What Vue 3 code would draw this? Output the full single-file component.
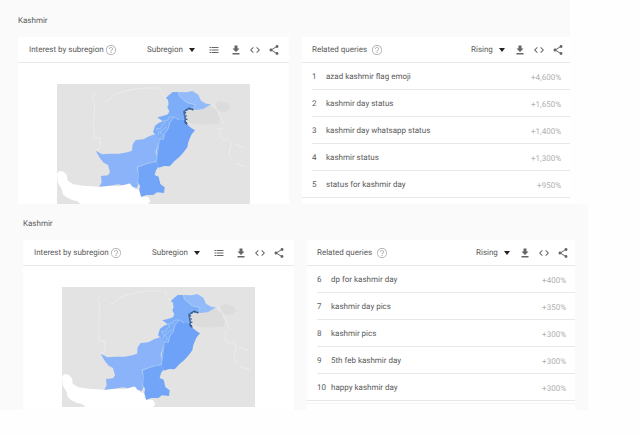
<script setup>
const sections = [
  {
    id: 'top',
    rows: [
      [1, 'azad kashmir flag emoji', '+4,600%'],
      [2, 'kashmir day status', '+1,650%'],
      [3, 'kashmir day whatsapp status', '+1,400%'],
      [4, 'kashmir status', '+1,300%'],
      [5, 'status for kashmir day', '+950%'],
    ],
  },
  {
    id: 'more',
    rows: [
      [6, 'dp for kashmir day', '+400%'],
      [7, 'kashmir day pics', '+350%'],
      [8, 'kashmir pics', '+300%'],
      [9, '5th feb kashmir day', '+300%'],
      [10, 'happy kashmir day', '+300%'],
    ],
  },
]

const actions = [
  { name: 'Download', d: 'M19 9h-4V3H9v6H5l7 7 7-7zM5 18v3h14v-3H5z' },
  { name: 'Embed', d: 'M9.4 16.6L4.8 12l4.6-4.6L8 6l-6 6 6 6 1.4-1.4zm5.2 0l4.6-4.6-4.6-4.6L16 6l6 6-6 6-1.4-1.4z' },
  { name: 'Share', d: 'M18 16.1c-.8 0-1.4.3-2 .8l-7.100-4.200c.1-.2.1-.4.1-.7s0-.5-.1-.7L16 7.200c.5.5 1.200.8 2 .8 1.700 0 3-1.300 3-3s-1.300-3-3-3-3 1.300-3 3c0 .2 0 .5.1.7L8 9.800C7.500 9.300 6.800 9 6 9c-1.700 0-3 1.300-3 3s1.300 3 3 3c.8 0 1.500-.3 2-.8l7.100 4.200c-.1.2-.1.4-.1.6 0 1.600 1.300 2.900 3 2.900s2.900-1.300 2.900-2.900-1.300-2.900-2.900-2.900z' },
]
</script>

<template>
  <main>
    <section v-for="s in sections" :key="s.id" class="section" :class="s.id">
      <h2>Kashmir</h2>
      <div class="cards">
        <article class="card region">
          <header>
            <h3>Interest by subregion</h3>
            <button class="help" aria-label="Help">
              <svg viewBox="0 0 24 24"><path d="M11 18h2v-2h-2v2zm1-16C6.500 2 2 6.500 2 12s4.500 10 10 10 10-4.500 10-10S17.500 2 12 2zm0 18.700c-4.800 0-8.700-3.900-8.700-8.700S7.200 3.300 12 3.300s8.700 3.900 8.700 8.700-3.900 8.700-8.700 8.700zM12 6c-2.200 0-4 1.800-4 4h1.500c0-1.400 1.100-2.500 2.500-2.500s2.500 1.100 2.500 2.500c0 2-3.200 2-3.200 5h1.500c0-2.200 3.200-2.500 3.200-5 0-2.200-1.800-4-4-4z" /></svg>
            </button>
            <span class="pick">
              <select aria-label="Resolution"><option>Subregion</option></select>
              <svg viewBox="0 0 6 4"><path d="M0 0h6L3 4z" /></svg>
            </span>
            <button class="icon list" aria-label="List view">
              <svg viewBox="0 0 24 24"><path d="M3 6h3v2H3zM3 11h3v2H3zM3 16h3v2H3zM7 6h14v2H7zM7 11h14v2H7zM7 16h14v2H7z" /></svg>
            </button>
            <button v-for="a in actions" :key="a.name" class="icon" :aria-label="a.name">
              <svg viewBox="0 0 24 24"><path :d="a.d" /></svg>
            </button>
          </header>
          <div class="map">
            <svg viewBox="21 18 579 360" role="img" aria-label="Interest in Pakistan by subregion">
              <path fill="#e3e3e3" d="M21 18H600V378H21z" />
              <path fill="#fff" d="M21 286L29 279 41 281 51 292 53 308 70 319 100 323 149 326 180 324 207 325 226 320 244 317 252 324 256 334 268 336 270 354 294 357 301 370 294 378H91L82 370 67 366 48 357 38 347 35 333 23 313z" />
              <path fill="#dcdcdc" d="M497 75L512 69 535 76 543 89 532 99 515 103 498 96zM439 94L480 82 498 96 510 118 508 136 470 140 432 137 411 133 404 107 420 96z" />
              <g fill="none" stroke="#f0f0f0" stroke-width="2">
                <path d="M137 218L150 210 151 181 132 178 131 130 134 79 128 55 139 45 M164 69L180 65 188 53 211 43 244 35 281 30 320 30M347 62L336 45 327 27 M487 77L504 98 515 127 525 143 M502 151L515 153 508 172 521 187 533 182 544 196 540 213 537 236 547 244 M551 197L580 209 M556 257L586 265" />
              </g>
              <path fill="#7dadf9" d="M357 51L368 42 385 42 389 54 410 74 436 80 433 91 413 91 402 102 405 125 387 126 373 119 360 133 354 153 344 166 340 184 328 188 322 176 309 162 315 143 327 134 338 130 322 118 338 114 354 109 358 100 352 88 356 78 353 64 347 61z" />
              <path fill="#93bbfa" d="M385 42L410 43 427 39 445 50 453 68 468 77 483 79 460 93 438 96 427 93 436 80 410 74 389 54z" />
              <path fill="#8ab3f9" d="M137 218L157 229 181 227 208 227 232 223 246 218 248 199 257 186 280 184 297 175 314 169 325 176 328 188 323 202 317 222 321 251 300 253 282 260 262 266 264 287 266 317 260 330 248 327 239 316 217 322 205 319 178 323 148 326 155 313 153 294 174 292 180 283 174 261 161 254 149 239z" />
              <path fill="#6ea2f8" d="M373 117L387 126 405 125 413 141 425 151 435 157 424 170 415 192 412 208 399 225 387 238 373 250 359 265 343 264 326 269 319 250 320 222 324 202 328 184 340 184 344 165 354 153 360 133z" />
              <path fill="#72a5f7" d="M264 267L282 260 303 252 321 253 325 266 318 277 314 291 326 296 331 318 344 328 342 345 321 343 310 351 289 351 274 357 268 337 270 323 262 308z" />
              <g fill="none" stroke="#a9d0f6" stroke-width="2">
                <path d="M385 42L388 55 411 74 436 80 428 94 M262 318L265 290 262 267 285 259 319 250 324 217 328 184 340 184 344 166 354 153 359 133 373 117 387 126M325 172L327 161 319 151 331 152 337 141 345 136 339 129 352 127 358 117 373 117M328 183L338 173 330 162 339 154 350 146" />
              </g>
              <path fill="none" stroke="#3f6ea8" stroke-width="5" d="M430 95L416 91 402 101 404 113 406 124 405 133 412 139" />
              <path fill="none" stroke="#2f5078" stroke-width="4" stroke-dasharray="4 6" d="M430 95L416 91 406 101 408 113 410 124 408 133 412 139" />
            </svg>
          </div>
        </article>
        <article class="card queries">
          <header>
            <h3>Related queries</h3>
            <button class="help" aria-label="Help">
              <svg viewBox="0 0 24 24"><path d="M11 18h2v-2h-2v2zm1-16C6.500 2 2 6.500 2 12s4.500 10 10 10 10-4.500 10-10S17.500 2 12 2zm0 18.700c-4.800 0-8.700-3.900-8.700-8.700S7.200 3.300 12 3.300s8.700 3.900 8.700 8.700-3.900 8.700-8.700 8.700zM12 6c-2.200 0-4 1.800-4 4h1.500c0-1.400 1.100-2.500 2.500-2.500s2.500 1.100 2.500 2.500c0 2-3.200 2-3.200 5h1.500c0-2.200 3.200-2.500 3.200-5 0-2.200-1.800-4-4-4z" /></svg>
            </button>
            <span class="pick rising">
              <select aria-label="Sort"><option>Rising</option></select>
              <svg viewBox="0 0 6 4"><path d="M0 0h6L3 4z" /></svg>
            </span>
            <button v-for="a in actions" :key="a.name" class="icon" :aria-label="a.name">
              <svg viewBox="0 0 24 24"><path :d="a.d" /></svg>
            </button>
          </header>
          <ol>
            <li v-for="[n, query, growth] in s.rows" :key="n">
              <span class="rank">{{ n }}</span>
              <span class="query">{{ query }}</span>
              <span class="growth">{{ growth }}</span>
            </li>
          </ol>
        </article>
      </div>
    </section>
  </main>
</template>

<style>
body {
  margin: 0;
  background: #fefefe;
}
</style>

<style scoped>
main {
  font-family: Roboto, sans-serif;
  font-size: 8px;
  line-height: 12px;
  color: #5a5a5a;
  text-rendering: geometricPrecision;
}
.section {
  background: #fafafa;
}
.top {
  margin-right: 70px;
  padding: 15px 0 0 18px;
}
.more {
  margin-right: 52px;
  padding: 14px 13px 0 23px;
}
h2 {
  margin: 0 0 10px;
  font-size: 8px;
  font-weight: 400;
}
.cards {
  display: grid;
  grid-template-columns: 271fr 268fr;
  column-gap: 13px;
}
.card {
  background: #fff;
}
header {
  display: flex;
  align-items: center;
  height: 25px;
  padding: 0 3px 0 10px;
  border-bottom: 1px solid #e8e8e8;
}
.region header {
  padding: 0 6px 0 11px;
}
h3 {
  margin: 0;
  font-size: 8px;
  font-weight: 400;
  white-space: nowrap;
}
button {
  display: flex;
  align-items: center;
  justify-content: center;
  padding: 0;
  border: 0;
  background: none;
}
svg {
  display: block;
  fill: currentColor;
}
.help {
  margin-left: 4px;
  color: #a5a5a5;
}
.region .help {
  margin-left: 1px;
}
.help svg {
  width: 12px;
  height: 12px;
}
.icon {
  width: 19px;
  height: 19px;
  color: #666;
}
.icon svg {
  width: 12px;
  height: 12px;
}
.list {
  margin-right: 3px;
}
.pick {
  display: flex;
  align-items: center;
  margin-left: auto;
  margin-right: 9px;
}
.pick select {
  width: 42px;
  height: 12px;
  padding: 0;
  border: 0;
  appearance: none;
  background: none;
  font: inherit;
  color: inherit;
  text-rendering: inherit;
}
.pick svg {
  width: 6px;
  height: 4px;
  color: #222;
}
.rising {
  margin-right: 5px;
}
.rising select {
  width: 28px;
}
.map {
  padding: 21px 39px 0;
}
.map svg {
  width: 100%;
}
.more .map {
  padding-bottom: 3px;
}
ol {
  margin: 0;
  padding: 0;
  list-style: none;
}
li {
  display: flex;
  align-items: center;
  height: 26px;
  margin-left: 10px;
  padding-right: 9px;
  border-bottom: 1px solid #e8e8e8;
}
li:last-child {
  margin-left: 0;
  padding-left: 10px;
}
.more ol {
  padding-bottom: 2px;
  border-bottom: 1px solid #f5f5f5;
}
.rank {
  width: 14px;
}
.rank,
.query {
  padding-top: 1px;
}
.growth {
  margin-left: auto;
  padding-top: 4px;
  color: #b0b0b0;
}
</style>
